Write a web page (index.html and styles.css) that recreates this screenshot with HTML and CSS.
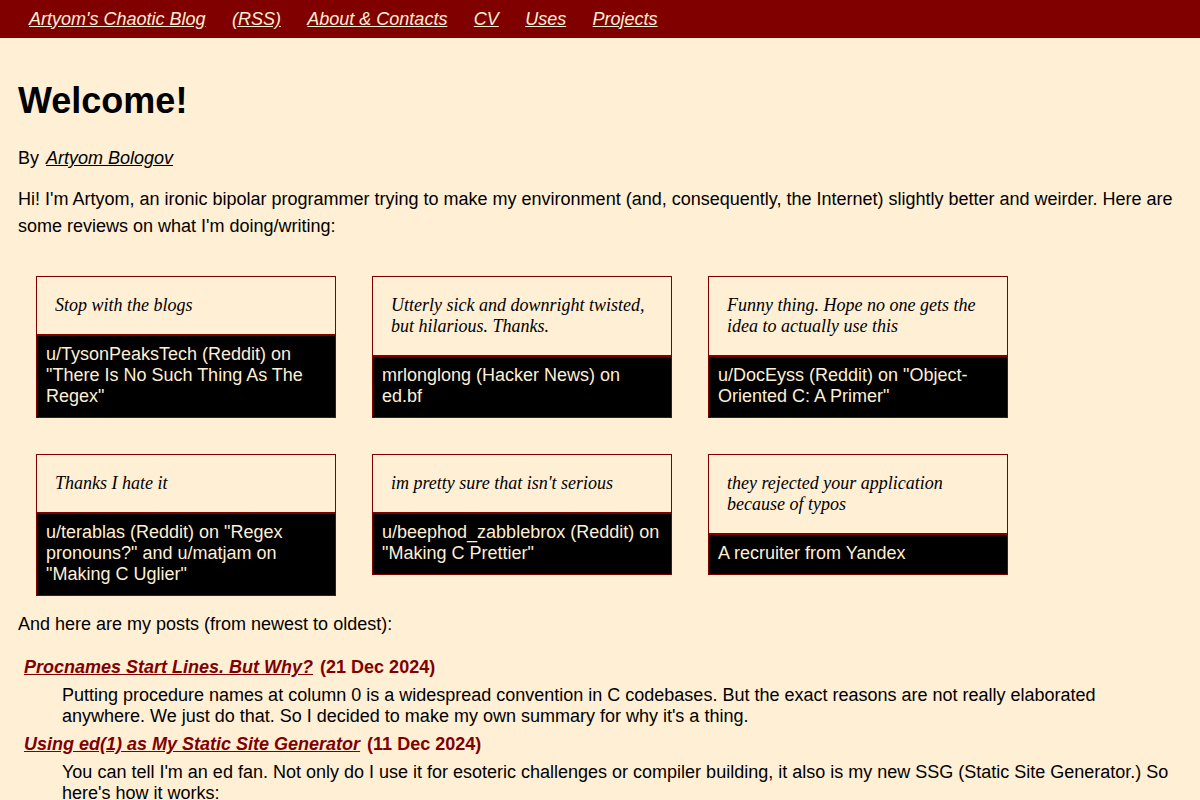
FILE: index.html
```html
<!DOCTYPE html>
<html lang="en">

<head>
    <meta charset="UTF-8">
    <meta name="viewport" content="width=device-width, initial-scale=1.0">
    <title>Artyom's Chaotic Blog</title>
    <link rel="stylesheet" href="styles.css">
</head>

<body>
    <nav class="topnav">
        <a href="#">Artyom's Chaotic Blog</a>
        <a href="#">(RSS)</a>
        <a href="#">About &amp; Contacts</a>
        <a href="#">CV</a>
        <a href="#">Uses</a>
        <a href="#">Projects</a>
    </nav>

    <main class="content">
        <h1>Welcome!</h1>
        <p class="byline">By <a href="#">Artyom Bologov</a></p>
        <p class="intro">Hi! I'm Artyom, an ironic bipolar programmer trying to make my environment (and, consequently, the Internet) slightly better and weirder. Here are some reviews on what I'm doing/writing:</p>

        <div class="reviews">
            <figure class="review">
                <blockquote>Stop with the blogs</blockquote>
                <figcaption>u/TysonPeaksTech (Reddit) on "There Is No Such Thing As The Regex"</figcaption>
            </figure>
            <figure class="review">
                <blockquote>Utterly sick and downright twisted, but hilarious. Thanks.</blockquote>
                <figcaption>mrlonglong (Hacker News) on ed.bf</figcaption>
            </figure>
            <figure class="review">
                <blockquote>Funny thing. Hope no one gets the idea to actually use this</blockquote>
                <figcaption>u/DocEyss (Reddit) on "Object-Oriented C: A Primer"</figcaption>
            </figure>
            <figure class="review">
                <blockquote>Thanks I hate it</blockquote>
                <figcaption>u/terablas (Reddit) on "Regex pronouns?" and u/matjam on "Making C Uglier"</figcaption>
            </figure>
            <figure class="review">
                <blockquote>im pretty sure that isn't serious</blockquote>
                <figcaption>u/beephod_zabblebrox (Reddit) on "Making C Prettier"</figcaption>
            </figure>
            <figure class="review">
                <blockquote>they rejected your application because of typos</blockquote>
                <figcaption>A recruiter from Yandex</figcaption>
            </figure>
        </div>

        <p class="posts-intro">And here are my posts (from newest to oldest):</p>

        <dl class="posts">
            <dt><a href="#">Procnames Start Lines. But Why?</a> <span class="date">(21 Dec 2024)</span></dt>
            <dd>Putting procedure names at column 0 is a widespread convention in C codebases. But the exact reasons are not really elaborated anywhere. We just do that. So I decided to make my own summary for why it's a thing.</dd>
            <dt><a href="#">Using ed(1) as My Static Site Generator</a> <span class="date">(11 Dec 2024)</span></dt>
            <dd>You can tell I'm an ed fan. Not only do I use it for esoteric challenges or compiler building, it also is my new SSG (Static Site Generator.) So here's how it works:</dd>
        </dl>
    </main>
</body>

</html>
```

FILE: styles.css
```css
body {
    margin: 0;
    font-family: "Liberation Sans", Arial, sans-serif;
    font-size: 18px;
    color: #000;
    background-color: #ffefd5;
}

a {
    color: inherit;
    font-style: italic;
}

.topnav {
    display: flex;
    gap: 26.4px;
    height: 38px;
    align-items: center;
    padding-left: 29px;
    background-color: #800000;
}

.topnav a {
    color: #ffefd5;
}

.content {
    padding: 0 18px;
}

h1 {
    font-size: 36px;
    line-height: 41px;
    margin: 42px 0 24px;
}

.byline,
.intro {
    line-height: 27px;
    margin: 0;
}

.byline {
    margin-bottom: 14px;
}

.byline a {
    margin-left: 2px;
}

.reviews {
    display: flex;
    flex-wrap: wrap;
    align-items: flex-start;
    gap: 36px;
    margin: 36px 18px 15px;
}

.review {
    width: 300px;
    box-sizing: border-box;
    margin: 0;
    border: 1px solid #800000;
}

.review blockquote {
    margin: 0;
    padding: 18px;
    font-family: "Liberation Serif", "Times New Roman", serif;
    font-style: italic;
    line-height: 21px;
}

.review figcaption {
    border-top: 2px solid #800000;
    background-color: #000;
    color: #ffefd5;
    padding: 8px 9px 10px;
    line-height: 21px;
}

.posts-intro {
    line-height: 27px;
    margin: 0 0 15px;
}

.posts {
    margin: 0;
    padding-left: 6px;
}

.posts dt {
    font-weight: bold;
    color: #800000;
    line-height: 28px;
}

.posts .date {
    margin-left: 2px;
}

.posts dd {
    margin: 4px 0 3px 38px;
    line-height: 21px;
}
```
